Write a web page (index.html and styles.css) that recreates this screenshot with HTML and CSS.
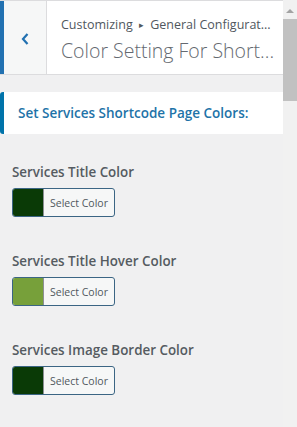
FILE: index.html
```html
<!DOCTYPE html>
<html lang="en">
<head>
    <meta charset="UTF-8">
    <meta name="viewport" content="width=device-width, initial-scale=1.0">
    <title>Customizer</title>
    <link rel="stylesheet" href="styles.css">
</head>
<body>
    <div class="panel">
        <!-- Section header -->
        <div class="header">
            <button class="back" title="Back">
                <svg width="10" height="14" viewBox="0 0 10 14"><path d="M7.5 2 L3 7 L7.5 12" fill="none" stroke="#2271b1" stroke-width="2.2"/></svg>
            </button>
            <div class="titles">
                <div class="crumb">Customizing <span class="arrow">&#9656;</span> General Configurat...</div>
                <div class="title">Color Setting For Short...</div>
            </div>
        </div>

        <div class="notice">Set Services Shortcode Page Colors:</div>

        <!-- Color controls -->
        <div class="control">
            <div class="label">Services Title Color</div>
            <button class="picker"><span class="swatch swatch-dark"></span><span class="picker-text">Select Color</span></button>
        </div>

        <div class="control">
            <div class="label">Services Title Hover Color</div>
            <button class="picker"><span class="swatch swatch-light"></span><span class="picker-text">Select Color</span></button>
        </div>

        <div class="control">
            <div class="label">Services Image Border Color</div>
            <button class="picker"><span class="swatch swatch-dark"></span><span class="picker-text">Select Color</span></button>
        </div>
    </div>

    <div class="scrollbar">
        <div class="scroll-up"></div>
        <div class="thumb"></div>
    </div>
</body>
</html>
```

FILE: styles.css
```css
body {
    margin: 0;
    height: 427px;
    overflow: hidden;
    display: flex;
    background-color: #f0f0f1;
    font-family: 'Open Sans', 'Noto Sans', sans-serif;
    color: #50575e;
}
.panel {
    flex: 1;
}
.header {
    display: flex;
    height: 73px;
    background: #fff;
    border-top: 1px solid #dcdcde;
    border-bottom: 1px solid #dcdcde;
}
.back {
    width: 47px;
    margin: 0;
    padding: 3px 0 0 0;
    border: none;
    border-left: 4px solid #2271b1;
    border-right: 1px solid #dcdcde;
    background: #f6f7f7;
    display: flex;
    align-items: center;
    justify-content: center;
}
.titles {
    padding: 15px 0 0 14px;
    white-space: nowrap;
}
.crumb {
    font-size: 12.5px;
    line-height: 18px;
}
.arrow {
    font-size: 9px;
    vertical-align: 1px;
    margin: 0 3px;
}
.title {
    margin-top: 4px;
    font-size: 19.5px;
    font-weight: 300;
    line-height: 26px;
    color: #646970;
}
.notice {
    margin-top: 17px;
    height: 42px;
    line-height: 42px;
    padding-left: 14px;
    background: #fff;
    border-left: 4px solid #0073aa;
    border-radius: 3px 0 0 3px;
    color: #1e73a8;
    font-size: 13.5px;
    font-weight: 600;
}
.control {
    padding: 0 0 0 12px;
    margin-top: 35px;
}
.notice + .control {
    margin-top: 29px;
}
.label {
    font-size: 13.4px;
    font-weight: 600;
    line-height: 18px;
    margin-bottom: 7px;
    color: #555b61;
}
.picker {
    display: flex;
    width: 103px;
    height: 29px;
    padding: 0;
    margin: 0;
    border: 1px solid #3b6584;
    border-radius: 3px;
    background: #f6f7f7;
    overflow: hidden;
}
.swatch {
    width: 30px;
    height: 100%;
    border-right: 1px solid #8c8f94;
}
.swatch-dark {
    background: #0a3a06;
}
.swatch-light {
    background: #77a03a;
}
.picker-text {
    flex: 1;
    align-self: center;
    font-family: 'Open Sans', 'Noto Sans', sans-serif;
    font-size: 10.5px;
    color: #50575e;
}
.scrollbar {
    width: 14px;
    background: #f1f1f1;
}
.scroll-up {
    width: 0;
    height: 0;
    margin: 9px auto 6px auto;
    border-left: 4px solid transparent;
    border-right: 4px solid transparent;
    border-bottom: 4px solid #a3a3a3;
}
.thumb {
    height: 82px;
    background: #c1c1c1;
}
```
